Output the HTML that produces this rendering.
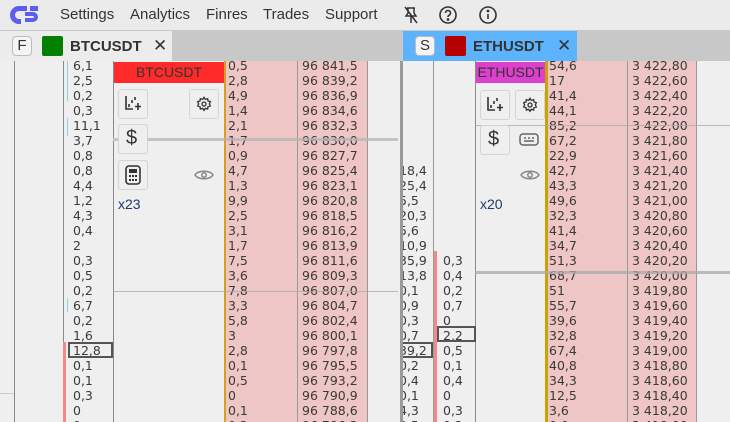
<!DOCTYPE html>
<html style="width:730px;height:422px;overflow:hidden"><head><meta charset="utf-8">
<style>
*{margin:0;padding:0;box-sizing:border-box}
body{width:730px;height:422px;overflow:hidden;background:#efefef;font-family:"Liberation Sans",sans-serif;position:relative;color:#333}
.a{position:absolute}
.col{position:absolute;font-family:"DejaVu Sans",sans-serif;font-size:12.5px;line-height:15px;color:#3a3a3a;white-space:pre;overflow:hidden;max-height:364px}
.menu{position:absolute;top:6px;font-size:15px;color:#333}
.btn{position:absolute;width:30px;height:30px;border:1px solid #d4d4d4;border-radius:3px;background:#efefef}
.vl{position:absolute;width:1px;background:#8a8a8a}
</style></head><body>
<div class="a" style="left:0;top:0;width:730px;height:30px;background:#ebebeb"></div>
<svg class="a" style="left:10px;top:5px" width="29" height="20" viewBox="0 0 29 20">
<path d="M9 1h8v5H9a4 4 0 0 0 0 8h2v5H9A9 9 0 0 1 9 1z" fill="#5d5df2"/>
<path d="M15 7h8a5 5 0 0 1 0 10h-8v-4h8a1 1 0 0 0 0-2h-8z M20 1h8v5h-8z" fill="#5d5df2"/>
</svg>
<div class="menu" style="left:60px">Settings</div>
<div class="menu" style="left:130px">Analytics</div>
<div class="menu" style="left:206px">Finres</div>
<div class="menu" style="left:263px">Trades</div>
<div class="menu" style="left:325px">Support</div>
<svg class="a" style="left:402px;top:5px" width="18" height="20" viewBox="0 0 18 20" fill="none" stroke="#333" stroke-width="1.5"><path d="M5 3h8M6 3v5l-2 3h10l-2-3V3M9 11v7M3 2l12 16"/></svg>
<svg class="a" style="left:438px;top:5px" width="20" height="20" viewBox="0 0 20 20" fill="none" stroke="#333" stroke-width="1.6"><circle cx="10" cy="10" r="8"/><path d="M7.5 8a2.5 2.5 0 1 1 3.5 2.3c-.8.4-1 1-1 1.7"/><circle cx="10" cy="14.5" r=".6" fill="#333"/></svg>
<svg class="a" style="left:478px;top:5px" width="20" height="20" viewBox="0 0 20 20" fill="none" stroke="#333" stroke-width="1.6"><circle cx="10" cy="10" r="8"/><path d="M10 9v5"/><circle cx="10" cy="6" r=".6" fill="#333"/></svg>
<div class="a" style="left:0;top:30px;width:730px;height:31px;background:#c8c8c8"></div>
<div class="a" style="left:0;top:31px;width:172px;height:30px;background:#ececec"></div>
<div class="a" style="left:12px;top:36px;width:20px;height:20px;border:1px solid #bbb;border-radius:4px;background:#f4f4f4;font-size:15px;text-align:center;line-height:18px">F</div>
<div class="a" style="left:42px;top:36px;width:21px;height:20px;background:#028002;border-radius:2px"></div>
<div class="a" style="left:70px;top:38px;font-size:15px;font-weight:bold;color:#333">BTCUSDT</div>
<div class="a" style="left:153px;top:36px;font-size:17px;color:#333">✕</div>
<div class="a" style="left:403px;top:31px;width:174px;height:30px;background:#5db3fd"></div>
<div class="a" style="left:415px;top:36px;width:20px;height:20px;border:1px solid #bbb;border-radius:4px;background:#f4f4f4;font-size:15px;text-align:center;line-height:18px">S</div>
<div class="a" style="left:445px;top:36px;width:21px;height:20px;background:#b50000;border-radius:2px"></div>
<div class="a" style="left:473px;top:38px;font-size:15px;font-weight:bold;color:#333">ETHUSDT</div>
<div class="a" style="left:557px;top:36px;font-size:17px;color:#333">✕</div>

<div class="vl" style="left:14px;top:61px;height:361px"></div>
<div class="vl" style="left:63px;top:61px;height:361px"></div>
<div class="vl" style="left:113px;top:61px;height:361px"></div>
<div class="a" style="left:67px;top:61px;width:1px;height:40px;background:#8fd0f0"></div>
<div class="a" style="left:67px;top:118px;width:1px;height:18px;background:#8fd0f0"></div>
<div class="a" style="left:67px;top:298px;width:1px;height:14px;background:#8fd0f0"></div>
<div class="a" style="left:63px;top:342px;width:3px;height:80px;background:#f28a8a"></div>
<div class="col" style="left:73px;top:58px;width:40px">6,1
2,5
0,2
0,3
11,1
3,7
0,8
0,8
4,4
1,2
4,3
0,4
2
0,3
0,5
0,2
6,7
0,2
1,6
12,8
0,1
0,1
0,3
0
0</div>
<div class="a" style="left:68px;top:342px;width:45px;height:16px;border:2px solid #555"></div>
<div class="a" style="left:224px;top:61px;width:144px;height:361px;background:#eec6c5"></div>
<div class="a" style="left:224px;top:61px;width:2px;height:361px;background:#d4a020"></div>
<div class="vl" style="left:297px;top:61px;height:361px;background:#999"></div>
<div class="vl" style="left:367px;top:61px;height:361px;background:#999"></div>
<div class="col" style="left:228px;top:58px;width:68px">0,5
2,8
4,9
1,4
2,1
1,7
0,9
4,7
1,3
9,9
2,5
3,1
1,7
7,5
3,6
7,8
3,3
5,8
3
2,8
0,1
0,5
0
0,1
0,2</div>
<div class="col" style="left:302px;top:58px;width:66px">96 841,5
96 839,2
96 836,9
96 834,6
96 832,3
96 830,0
96 827,7
96 825,4
96 823,1
96 820,8
96 818,5
96 816,2
96 813,9
96 811,6
96 809,3
96 807,0
96 804,7
96 802,4
96 800,1
96 797,8
96 795,5
96 793,2
96 790,9
96 788,6
96 786,3</div>
<div class="a" style="left:113px;top:138px;width:285px;height:3px;background:rgba(180,180,180,.75)"></div>
<div class="a" style="left:113px;top:291px;width:285px;height:1px;background:rgba(170,170,170,.8)"></div>
<div class="a" style="left:114px;top:61px;width:110px;height:77px;background:#efefef"></div>
<div class="a" style="left:114px;top:141px;width:110px;height:150px;background:#efefef"></div>
<div class="a" style="left:114px;top:292px;width:110px;height:130px;background:#efefef"></div>
<div class="a" style="left:113px;top:138px;width:111px;height:3px;background:#c4c4c4"></div>
<div class="a" style="left:114px;top:62px;width:110px;height:21px;background:#ff2a2a;color:#333;font-size:14px;text-align:center;line-height:21px">BTCUSDT</div>
<div class="btn" style="left:118px;top:89px"></div>
<svg class="a" style="left:124px;top:94px" width="18" height="18" viewBox="0 0 18 18" fill="none" stroke="#333" stroke-width="1.6"><path d="M2 2v13h7M5 10v3M8 6v3M11 3v3M14 9v7M11 12.5h6"/></svg>
<div class="btn" style="left:189px;top:89px"></div>
<svg class="a" style="left:196px;top:96px" width="16" height="16" viewBox="0 0 24 24" fill="none" stroke="#333" stroke-width="2"><circle cx="12" cy="12" r="3"/><path d="M12 2l2 3 3.5-1 .5 3.5 3.5 1-1.5 3.5 1.5 3-3.5 1-.5 3.5-3.5-1-2 3-2-3-3.5 1-.5-3.5-3.5-1 1.5-3-1.5-3.5 3.5-1 .5-3.5 3.5 1z"/></svg>
<div class="btn" style="left:118px;top:124px"></div>
<div class="a" style="left:126px;top:127px;font-size:20px;color:#333">$</div>
<div class="btn" style="left:118px;top:160px"></div>
<svg class="a" style="left:124px;top:165px" width="18" height="20" viewBox="0 0 18 20"><rect x="2" y="1" width="14" height="18" rx="3" fill="none" stroke="#333" stroke-width="1.6"/><rect x="5" y="4" width="8" height="4" fill="#333"/><g fill="#333"><rect x="5" y="10" width="2" height="2"/><rect x="8" y="10" width="2" height="2"/><rect x="11" y="10" width="2" height="2"/><rect x="5" y="14" width="2" height="2"/><rect x="8" y="14" width="2" height="2"/><rect x="11" y="14" width="2" height="2"/></g></svg>
<svg class="a" style="left:194px;top:168px" width="20" height="14" viewBox="0 0 20 14" fill="none" stroke="#888" stroke-width="1.5"><path d="M1 7C4 2 16 2 19 7C16 12 4 12 1 7z"/><circle cx="10" cy="7" r="2.2"/></svg>
<div class="a" style="left:118px;top:196px;font-size:14px;color:#1d3a6a">x23</div>

<div class="vl" style="left:433px;top:61px;height:361px;background:#999"></div>
<div class="vl" style="left:475px;top:61px;height:361px"></div>
<div class="col" style="left:399px;top:163px;width:34px">18,4
25,4
5,5
20,3
5,6
10,9
35,9
13,8
0,1
0,9
0,3
0,7
39,2
0,2
0,4
0,1
4,3
0,5</div>
<div class="a" style="left:401px;top:342px;width:32px;height:16px;border:2px solid #555;border-left:none"></div>
<div class="a" style="left:398px;top:61px;width:2px;height:361px;background:#efefef"></div>
<div class="a" style="left:400px;top:61px;width:3px;height:361px;background:#9a9a9a"></div>
<div class="a" style="left:434px;top:251px;width:3px;height:171px;background:#f28a8a"></div>
<div class="col" style="left:443px;top:253px;width:32px">0,3
0,4
0,2
0,7
0
2,2
0,5
0,1
0,4
0
0,3
0,2</div>
<div class="a" style="left:437px;top:326px;width:39px;height:16px;border:2px solid #555"></div>
<div class="a" style="left:545px;top:61px;width:152px;height:361px;background:#eec6c5"></div>
<div class="a" style="left:545px;top:61px;width:3px;height:361px;background:#c8a400"></div>
<div class="vl" style="left:627px;top:61px;height:361px;background:#999"></div>
<div class="vl" style="left:696px;top:61px;height:361px;background:#999"></div>
<div class="col" style="left:549px;top:58px;width:78px">54,6
17
41,4
44,1
85,2
67,2
22,9
42,7
43,3
49,6
32,3
41,4
34,7
51,3
68,7
51
55,7
39,6
32,8
67,4
40,8
34,3
12,5
3,6
0,0</div>
<div class="col" style="left:632px;top:58px;width:64px">3 422,80
3 422,60
3 422,40
3 422,20
3 422,00
3 421,80
3 421,60
3 421,40
3 421,20
3 421,00
3 420,80
3 420,60
3 420,40
3 420,20
3 420,00
3 419,80
3 419,60
3 419,40
3 419,20
3 419,00
3 418,80
3 418,60
3 418,40
3 418,20
3 418,00</div>
<div class="a" style="left:475px;top:125px;width:255px;height:1px;background:rgba(170,170,170,.8)"></div>
<div class="a" style="left:475px;top:271px;width:255px;height:3px;background:rgba(170,170,170,.75)"></div>
<div class="a" style="left:0;top:393px;width:14px;height:1px;background:#ccc"></div>
<div class="a" style="left:476px;top:61px;width:69px;height:64px;background:#efefef"></div>
<div class="a" style="left:476px;top:126px;width:69px;height:145px;background:#efefef"></div>
<div class="a" style="left:476px;top:274px;width:69px;height:148px;background:#efefef"></div>
<div class="a" style="left:476px;top:62px;width:69px;height:21px;background:#dd40cc;color:#333;font-size:14px;text-align:center;line-height:21px">ETHUSDT</div>
<div class="btn" style="left:480px;top:90px"></div>
<svg class="a" style="left:486px;top:95px" width="18" height="18" viewBox="0 0 18 18" fill="none" stroke="#333" stroke-width="1.6"><path d="M2 2v13h7M5 10v3M8 6v3M11 3v3M14 9v7M11 12.5h6"/></svg>
<div class="btn" style="left:515px;top:90px"></div>
<svg class="a" style="left:522px;top:97px" width="16" height="16" viewBox="0 0 24 24" fill="none" stroke="#333" stroke-width="2"><circle cx="12" cy="12" r="3"/><path d="M12 2l2 3 3.5-1 .5 3.5 3.5 1-1.5 3.5 1.5 3-3.5 1-.5 3.5-3.5-1-2 3-2-3-3.5 1-.5-3.5-3.5-1 1.5-3-1.5-3.5 3.5-1 .5-3.5 3.5 1z"/></svg>
<div class="btn" style="left:480px;top:125px"></div>
<div class="a" style="left:488px;top:128px;font-size:20px;color:#333">$</div>
<svg class="a" style="left:519px;top:133px" width="20" height="13" viewBox="0 0 20 13" fill="none" stroke="#666" stroke-width="1.5"><rect x="1" y="1" width="18" height="11" rx="3"/><path d="M5 5h2M9 5h2M13 5h2M5 8h10"/></svg>
<svg class="a" style="left:520px;top:168px" width="20" height="14" viewBox="0 0 20 14" fill="none" stroke="#888" stroke-width="1.5"><path d="M1 7C4 2 16 2 19 7C16 12 4 12 1 7z"/><circle cx="10" cy="7" r="2.2"/></svg>
<div class="a" style="left:480px;top:196px;font-size:14px;color:#1d3a6a">x20</div>
</body></html>
